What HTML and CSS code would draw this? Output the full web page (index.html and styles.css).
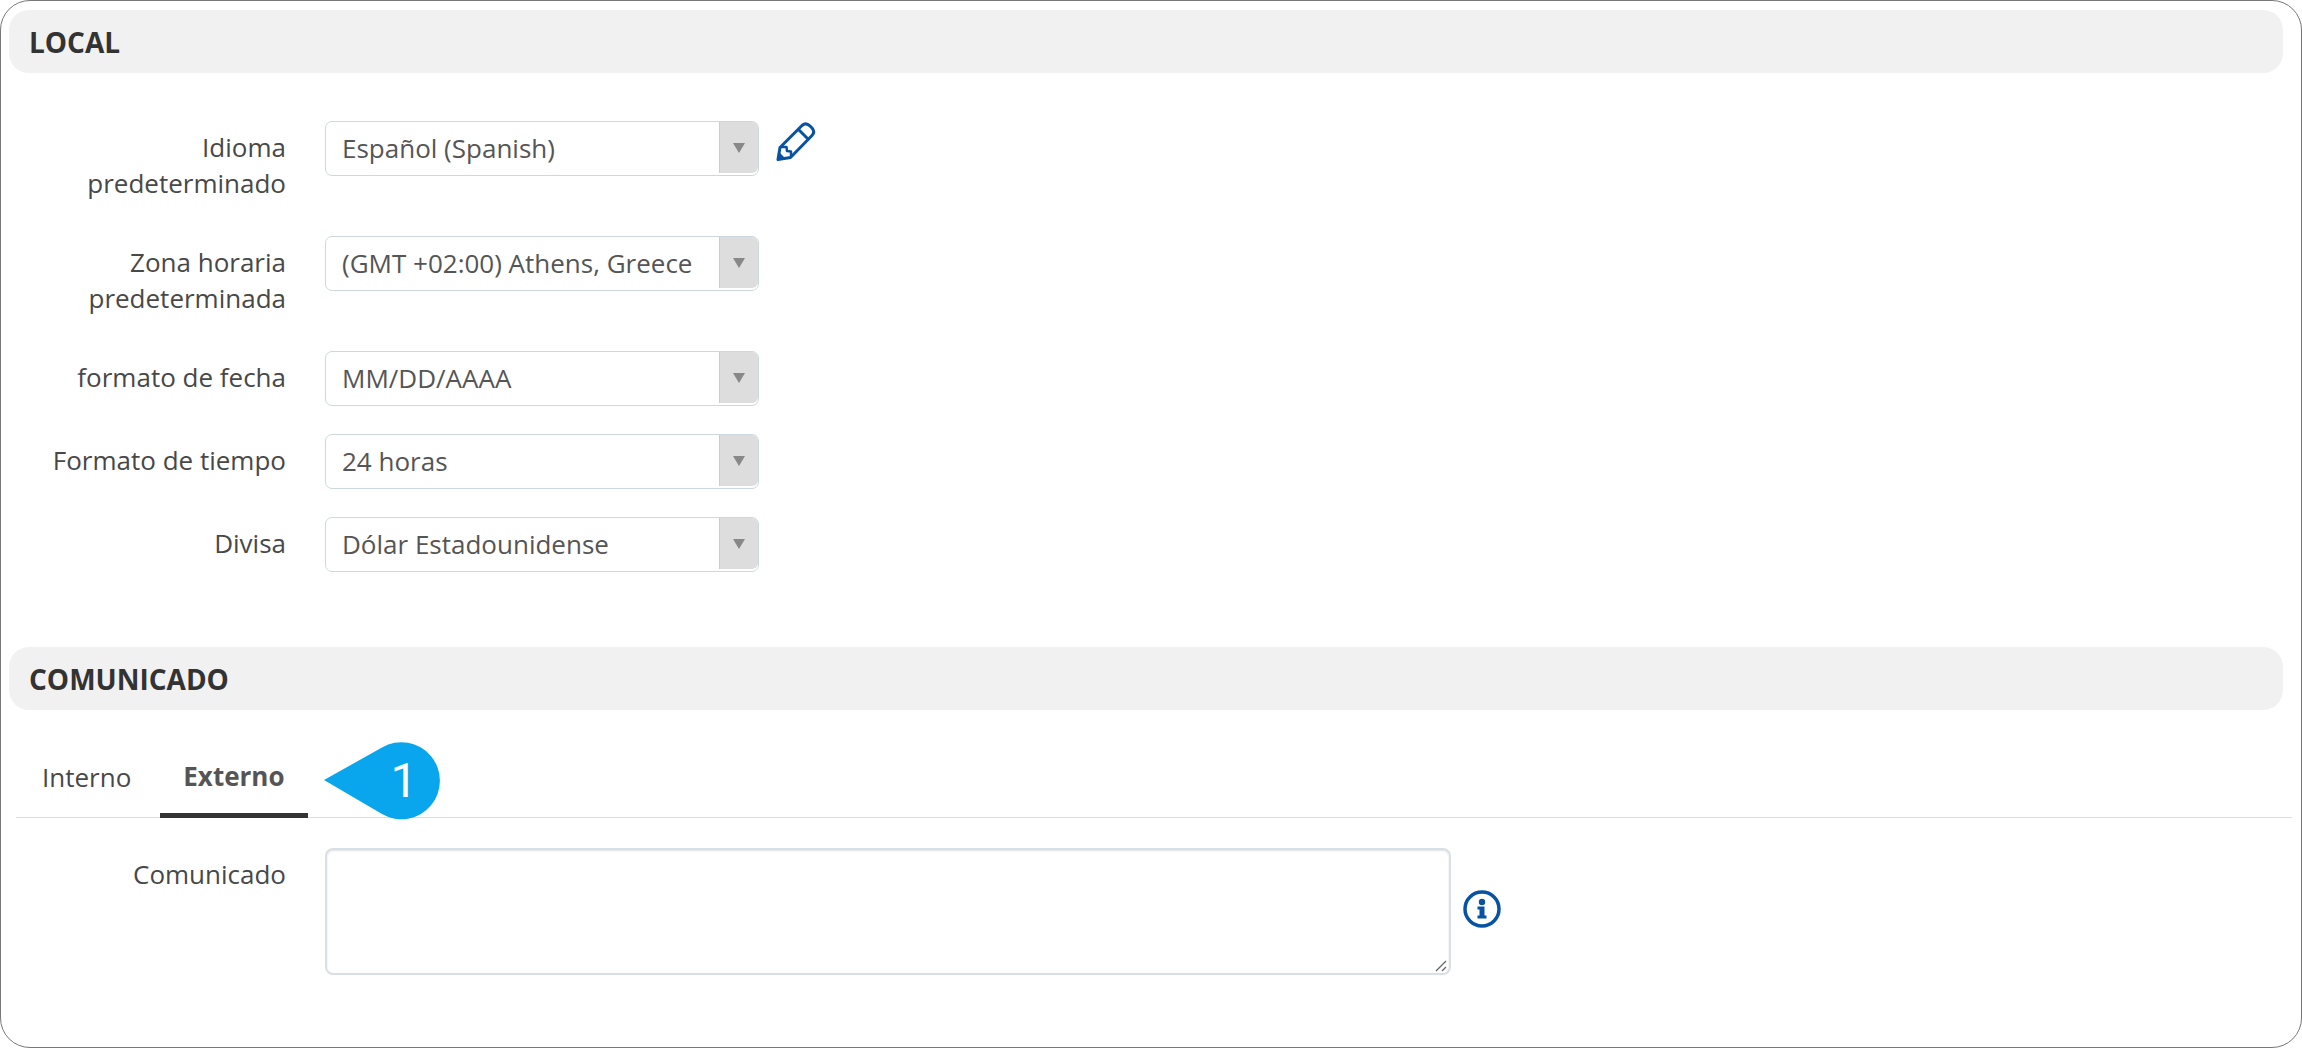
FILE: index.html
```html
<!DOCTYPE html>
<html lang="es">
<head>
  <meta charset="UTF-8">
  <meta name="viewport" content="width=device-width, initial-scale=1.0">
  <title>Configuración</title>
  <link rel="stylesheet" href="styles.css">
</head>
<body>
  <form class="settings">
    <section class="local">
      <h2 class="section-title">LOCAL</h2>
      <div class="fields">
        <div class="row">
          <label for="idioma">Idioma predeterminado</label>
          <div class="select">
            <select id="idioma">
              <option>Español (Spanish)</option>
            </select>
          </div>
          <a href="#" class="edit" aria-label="Editar">
            <svg viewBox="0 0 40 40" width="40" height="40">
              <g fill="none" stroke="#0852a3" stroke-width="3" stroke-linejoin="round">
                <path d="M2 38.500 4 26.500 26 4.500Q30 1 34 5L36 7Q39.500 11 36 14.500L14.500 36.500Z"/>
                <path d="M22.500 8.500 32.500 18.500"/>
                <path stroke-width="2.5" d="M5 26H10.500L11 30 15 30.500V35.500"/>
              </g>
              <path fill="#0852a3" d="M1 39.500 3 31 9.500 37.500Z"/>
            </svg>
          </a>
        </div>
        <div class="row">
          <label for="zona">Zona horaria predeterminada</label>
          <div class="select">
            <select id="zona">
              <option>(GMT +02:00) Athens, Greece</option>
            </select>
          </div>
        </div>
        <div class="row">
          <label for="fecha">formato de fecha</label>
          <div class="select">
            <select id="fecha">
              <option>MM/DD/AAAA</option>
            </select>
          </div>
        </div>
        <div class="row">
          <label for="tiempo">Formato de tiempo</label>
          <div class="select">
            <select id="tiempo">
              <option>24 horas</option>
            </select>
          </div>
        </div>
        <div class="row">
          <label for="divisa">Divisa</label>
          <div class="select">
            <select id="divisa">
              <option>Dólar Estadounidense</option>
            </select>
          </div>
        </div>
      </div>
    </section>

    <section class="comunicado">
      <h2 class="section-title">COMUNICADO</h2>
      <div class="tabs">
        <button type="button" class="tab">Interno</button>
        <button type="button" class="tab active">Externo</button>
        <div class="marker">
          <svg viewBox="0 0 118 78" width="118" height="78">
            <path fill="#09a6ee" d="M0 38 58 5.500A38.500 38.500 0 1 1 58 72Z"/>
          </svg>
          <span>1</span>
        </div>
      </div>
      <div class="row message">
        <label for="texto">Comunicado</label>
        <textarea id="texto"></textarea>
        <a href="#" class="info" aria-label="Información">
          <svg viewBox="0 0 38 38" width="38" height="38">
            <circle cx="19" cy="19" r="17" fill="none" stroke="#0852a3" stroke-width="3.5"/>
            <circle cx="19" cy="12" r="3.200" fill="#0852a3"/>
            <path fill="#0852a3" d="M14.500 16.500H21.500V25.500H23.500V28.500H14.500V25.500H16.500V19.500H14.500Z"/>
          </svg>
        </a>
      </div>
    </section>
  </form>
</body>
</html>
```
FILE: styles.css
```css
*{
  box-sizing: border-box;
}
body{
  margin: 0;
  color: #484848;
  font-family: "Open Sans", "Liberation Sans", sans-serif;
  font-size: 26px;
  line-height: 36px;
}
.settings{
  min-height: 100vh;
  padding: 9px 8px;
  border: 1px solid #777;
  border-radius: 30px;
  background: #fff;
}
.section-title{
  height: 63px;
  margin: 0 10px 0 0;
  padding: 1px 20px 0;
  border-radius: 20px;
  background: #f1f1f1;
  color: #333;
  font-size: 28px;
  font-weight: 700;
  line-height: 63px;
}
.fields{
  display: flex;
  flex-direction: column;
  gap: 28px;
  padding: 48px 0 75px;
}
.row{
  display: flex;
  align-items: flex-start;
}
.row label{
  width: 277px;
  margin-right: 39px;
  padding: 8px 0 7px 40px;
  text-align: right;
}
.fields .row:nth-child(n+3) label{
  padding-bottom: 11px;
}

/* select */
.select{
  position: relative;
  width: 434px;
}
.select select{
  display: block;
  width: 100%;
  height: 55px;
  padding: 0 48px 2px 16px;
  border: 1px solid #cdd8de;
  border-radius: 7px;
  background: #fff;
  color: #555;
  font: inherit;
  appearance: none;
}
.select::before{
  content: "";
  position: absolute;
  top: 1px;
  right: 1px;
  bottom: 3px;
  width: 38px;
  border-left: 1px solid #ccc;
  border-radius: 0 6px 6px 0;
  background: #ddd;
  pointer-events: none;
}
.select::after{
  content: "";
  position: absolute;
  top: 22px;
  right: 14px;
  border: 6px solid transparent;
  border-top: 10px solid #888;
  border-bottom: 0;
  pointer-events: none;
}
.edit{
  height: 40px;
  margin-left: 17px;
}
.edit svg, .info svg, .marker svg{
  display: block;
}

/* tabs */
.tabs{
  display: flex;
  height: 108px;
  margin: 0 1px 30px 7px;
  padding-top: 30px;
  border-bottom: 1px solid #ddd;
}
.tab{
  height: 78px;
  padding: 0 25px 0 26px;
  border: 0;
  border-bottom: 5px solid transparent;
  background: none;
  color: #484848;
  font: inherit;
}
.tab + .tab{
  margin-left: 4px;
  padding: 0 23px 2px;
}
.tab.active{
  border-bottom-color: #333;
  color: #555;
  font-weight: 700;
}
.marker{
  position: relative;
  top: 2px;
  margin-left: 16px;
}
.marker span{
  position: absolute;
  top: 0;
  right: 24px;
  color: #fff;
  font-family: Roboto, sans-serif;
  font-size: 48px;
  line-height: 78px;
}

/* textarea */
.message{
  padding-right: 32px;
}
.message label{
  padding-left: 0;
}
.message textarea{
  width: 50%;
  height: 127px;
  padding: 9px 17px;
  border: 2px solid #d8e0e5;
  border-radius: 8px;
  box-shadow: inset 0 1px 2px rgba(0, 0, 0, .12);
  font: inherit;
  resize: both;
}
.message textarea::-webkit-resizer{
  background: url("data:image/svg+xml,%3Csvg xmlns='http://www.w3.org/2000/svg' viewBox='0 0 15 15'%3E%3Cpath d='M2 13 12 3M8 13 12 9' stroke='%23666' stroke-width='1.3'/%3E%3C/svg%3E") no-repeat;
}
.info{
  align-self: center;
  margin: 0 12px 6px;
}
```
